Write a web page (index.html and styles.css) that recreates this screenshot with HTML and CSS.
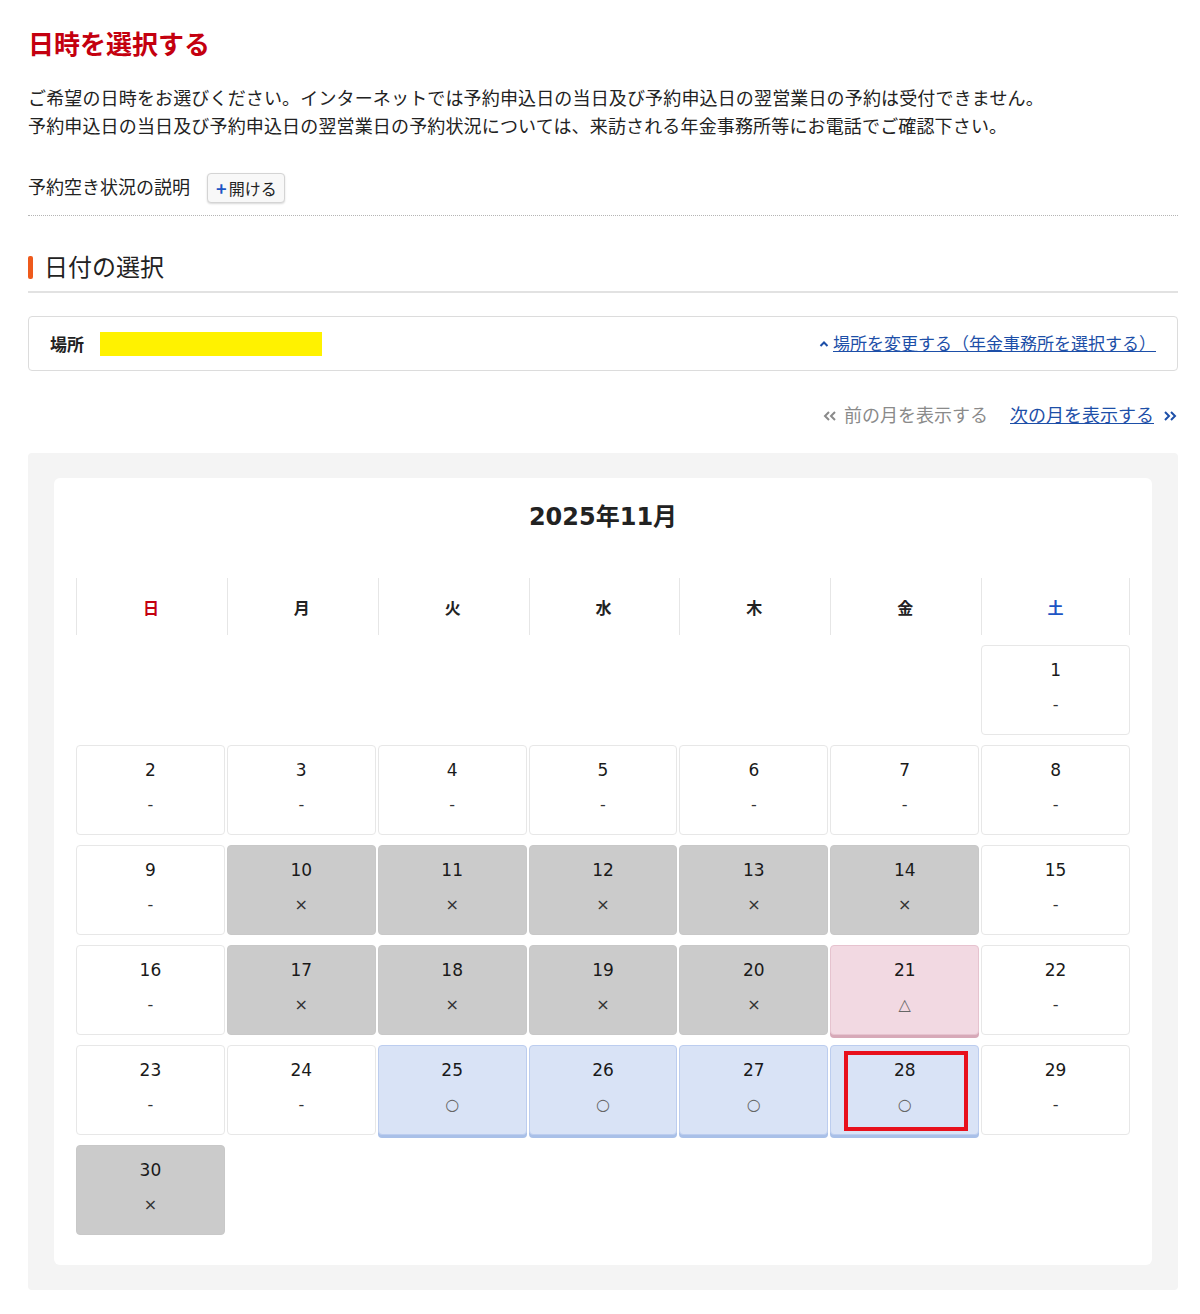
FILE: index.html
```html
<!DOCTYPE html>
<html lang="ja">
<head>
  <meta charset="UTF-8" />
  <meta name="viewport" content="width=device-width, initial-scale=1.0"/>
  <title>日時を選択する</title>
  <link rel="stylesheet" href="styles.css">
</head>
<body>
  <div class="page">
    <h1 class="page-title">日時を選択する</h1>

    <p class="lead">ご希望の日時をお選びください。インターネットでは予約申込日の当日及び予約申込日の翌営業日の予約は受付できません。<br>予約申込日の当日及び予約申込日の翌営業日の予約状況については、来訪される年金事務所等にお電話でご確認下さい。</p>

    <div class="legend">
      <span>予約空き状況の説明</span>
      <button class="toggle-btn"><span class="plus">+</span>開ける</button>
    </div>

    <h2 class="section-title">日付の選択</h2>

    <div class="place-box">
      <span class="place-label">場所</span>
      <span class="place-name"></span>
      <a class="place-change" href="#">
        <svg width="10" height="8" viewBox="0 0 10 8"><path d="M1.5 6 L5 2.5 L8.5 6" fill="none" stroke="#1d4fa8" stroke-width="2"/></svg>
        <span>場所を変更する（年金事務所を選択する）</span>
      </a>
    </div>

    <div class="month-nav">
      <span class="prev">
        <svg width="16" height="12" viewBox="0 0 16 12"><path d="M7 2 L3 6 L7 10 M13 2 L9 6 L13 10" fill="none" stroke="#8a8a8a" stroke-width="2"/></svg>
        前の月を表示する
      </span>
      <a class="next" href="#"><span>次の月を表示する</span>
        <svg width="16" height="12" viewBox="0 0 16 12"><path d="M3 2 L7 6 L3 10 M9 2 L13 6 L9 10" fill="none" stroke="#1d4fa8" stroke-width="2"/></svg>
      </a>
    </div>

    <div class="calendar-panel">
      <div class="calendar-card">
        <div class="month-title">2025年11月</div>

        <div class="calendar-grid">
          <div class="wday sun">日</div>
          <div class="wday">月</div>
          <div class="wday">火</div>
          <div class="wday">水</div>
          <div class="wday">木</div>
          <div class="wday">金</div>
          <div class="wday sat">土</div>

          <div class="day is-blank"></div>
          <div class="day is-blank"></div>
          <div class="day is-blank"></div>
          <div class="day is-blank"></div>
          <div class="day is-blank"></div>
          <div class="day is-blank"></div>
          <div class="day"><span class="num">1</span><span class="mark">-</span></div>

          <div class="day"><span class="num">2</span><span class="mark">-</span></div>
          <div class="day"><span class="num">3</span><span class="mark">-</span></div>
          <div class="day"><span class="num">4</span><span class="mark">-</span></div>
          <div class="day"><span class="num">5</span><span class="mark">-</span></div>
          <div class="day"><span class="num">6</span><span class="mark">-</span></div>
          <div class="day"><span class="num">7</span><span class="mark">-</span></div>
          <div class="day"><span class="num">8</span><span class="mark">-</span></div>

          <div class="day"><span class="num">9</span><span class="mark">-</span></div>
          <div class="day is-full"><span class="num">10</span><span class="mark">×</span></div>
          <div class="day is-full"><span class="num">11</span><span class="mark">×</span></div>
          <div class="day is-full"><span class="num">12</span><span class="mark">×</span></div>
          <div class="day is-full"><span class="num">13</span><span class="mark">×</span></div>
          <div class="day is-full"><span class="num">14</span><span class="mark">×</span></div>
          <div class="day"><span class="num">15</span><span class="mark">-</span></div>

          <div class="day"><span class="num">16</span><span class="mark">-</span></div>
          <div class="day is-full"><span class="num">17</span><span class="mark">×</span></div>
          <div class="day is-full"><span class="num">18</span><span class="mark">×</span></div>
          <div class="day is-full"><span class="num">19</span><span class="mark">×</span></div>
          <div class="day is-full"><span class="num">20</span><span class="mark">×</span></div>
          <div class="day is-few"><span class="num">21</span><span class="mark">△</span></div>
          <div class="day"><span class="num">22</span><span class="mark">-</span></div>

          <div class="day"><span class="num">23</span><span class="mark">-</span></div>
          <div class="day"><span class="num">24</span><span class="mark">-</span></div>
          <div class="day is-open"><span class="num">25</span><span class="mark">○</span></div>
          <div class="day is-open"><span class="num">26</span><span class="mark">○</span></div>
          <div class="day is-open"><span class="num">27</span><span class="mark">○</span></div>
          <div class="day is-open is-picked"><span class="num">28</span><span class="mark">○</span><span class="pick-frame"></span></div>
          <div class="day"><span class="num">29</span><span class="mark">-</span></div>

          <div class="day is-full"><span class="num">30</span><span class="mark">×</span></div>
        </div>
      </div>
    </div>
  </div>
</body>
</html>
```

FILE: styles.css
```css
body {
  margin: 0;
  font-family: "DejaVu Sans", "Noto Sans CJK JP", sans-serif;
  color: #222;
  background-color: #fff;
}
.page {
  padding: 0 22px 24px 28px;
}
.page-title {
  margin: 27px 0 0 0;
  font-size: 26px;
  line-height: 36px;
  font-weight: bold;
  color: #c4000f;
}
.lead {
  margin: 22px 0 0 0;
  font-size: 18px;
  line-height: 28px;
  letter-spacing: 0.15px;
  color: #222;
}
.legend {
  margin-top: 32px;
  padding-bottom: 12px;
  border-bottom: 1px dotted #b5b5b5;
  display: flex;
  align-items: center;
  font-size: 18px;
  line-height: 30px;
}
.toggle-btn {
  margin-left: 17px;
  height: 30px;
  padding: 0 7px 0 8px;
  font-family: "Noto Sans CJK JP", sans-serif;
  font-size: 16px;
  color: #222;
  background-color: #f8f8f8;
  border: 1px solid #d4d4d4;
  border-radius: 4px;
  box-shadow: 0 1px 2px rgba(0,0,0,0.15);
  display: inline-flex;
  align-items: center;
}
.toggle-btn .plus {
  color: #1d55c4;
  font-weight: bold;
  font-size: 18px;
  margin-right: 2px;
}
.section-title {
  margin: 35px 0 0 0;
  padding: 0 0 6px 16px;
  position: relative;
  font-size: 24px;
  line-height: 34px;
  font-weight: normal;
  border-bottom: 2px solid #e2e2e2;
}
.section-title::before {
  content: "";
  position: absolute;
  left: 0;
  top: 5px;
  width: 5px;
  height: 23px;
  border-radius: 2px;
  background-color: #ee5a1c;
}
.place-box {
  margin-top: 23px;
  padding: 15px 21px 14px 21px;
  border: 1px solid #dcdcdc;
  border-radius: 4px;
  display: flex;
  align-items: center;
  line-height: 24px;
}
.place-label {
  font-family: "Noto Sans CJK JP", sans-serif;
  font-weight: bold;
  font-size: 17px;
}
.place-name {
  margin-left: 16px;
  width: 222px;
  height: 24px;
  background-color: #fff200;
}
.place-change {
  margin-left: auto;
  font-size: 17px;
  color: #1d4fa8;
  display: flex;
  align-items: center;
}
.place-change svg {
  margin-right: 4px;
}
.month-nav {
  margin-top: 31px;
  display: flex;
  justify-content: flex-end;
  align-items: center;
  font-size: 18px;
  line-height: 28px;
}
.month-nav .prev {
  color: #8a8a8a;
  display: flex;
  align-items: center;
  gap: 6px;
}
.month-nav .next {
  margin-left: 22px;
  color: #1d4fa8;
  display: flex;
  align-items: center;
  gap: 8px;
}
.calendar-panel {
  margin-top: 23px;
  padding: 25px 26px;
  background-color: #f4f4f4;
  border-radius: 4px;
}
.calendar-card {
  background-color: #fff;
  border-radius: 6px;
  padding: 22px 22px 30px 22px;
}
.month-title {
  text-align: center;
  font-size: 24px;
  line-height: 34px;
  font-weight: bold;
}
.calendar-grid {
  margin-top: 44px;
  display: grid;
  grid-template-columns: repeat(7, 1fr);
  column-gap: 2px;
  row-gap: 10px;
}
.wday {
  height: 57px;
  display: flex;
  align-items: center;
  justify-content: center;
  font-family: "Noto Sans CJK JP", sans-serif;
  font-weight: bold;
  font-size: 16px;
  border-left: 1px solid #e6e6e6;
}
.wday.sat {
  border-right: 1px solid #e6e6e6;
  color: #1d55c4;
}
.wday.sun {
  color: #c4000f;
}
.day {
  position: relative;
  height: 90px;
  box-sizing: border-box;
  padding-top: 12px;
  border: 1px solid #e7e7e7;
  border-radius: 4px;
  display: flex;
  flex-direction: column;
  align-items: center;
}
.day .num {
  font-size: 17px;
  line-height: 24px;
  color: #1a1a1a;
}
.day .mark {
  margin-top: 11px;
  font-size: 16px;
  line-height: 24px;
  color: #333;
}
.day.is-blank {
  border: none;
}
.day.is-full {
  background-color: #cbcbcb;
  border-color: #c8c8c8;
}
.day.is-few {
  background-color: #f2d9e2;
  border-color: #e6c3cf;
  box-shadow: 0 3px 0 #d7a9b8;
}
.day.is-open {
  background-color: #d9e3f6;
  border-color: #bccdef;
  box-shadow: 0 3px 0 #a9c0e8;
}
.day.is-few .mark, .day.is-open .mark {
  color: #666;
}
.pick-frame {
  position: absolute;
  left: 13px;
  right: 10px;
  top: 5px;
  bottom: 3px;
  border: 4px solid #e8101c;
}
```
